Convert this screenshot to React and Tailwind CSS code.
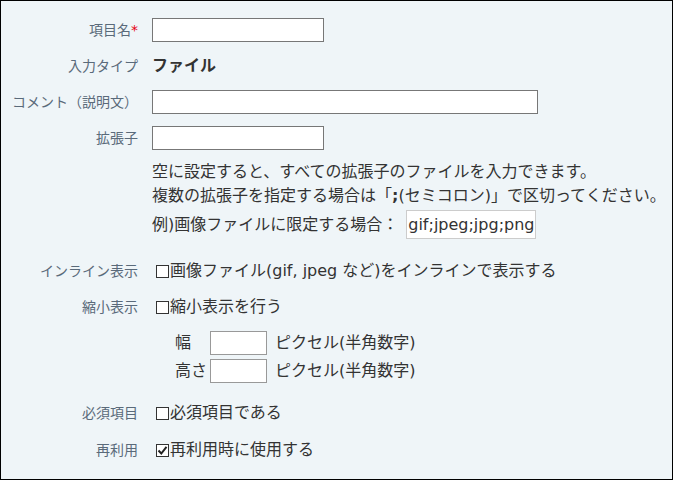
const font = { fontFamily: '"DejaVu Sans", "Noto Sans CJK JP", sans-serif' };

function Box({ checked }) {
  return (
    <span className="inline-flex items-center justify-center w-[13px] h-[13px] border border-[#333] bg-white ml-[4px] mr-[1px] shrink-0">
      {checked && (
        <svg width="11" height="11" viewBox="0 0 11 11">
          <path d="M1.5 5.5 L4.3 8.5 L9.5 1.8" fill="none" stroke="#222" strokeWidth="2" />
        </svg>
      )}
    </span>
  );
}

function Row({ label, required, className = "", children }) {
  return (
    <div className={`flex items-center h-[24px] ${className}`}>
      <div className="w-[151px] pr-[14px] text-right text-[14px] text-[#5a6a7a] whitespace-nowrap">
        {label}
        {required && <span className="text-[#e60012]">*</span>}
      </div>
      <div className="flex items-center text-[16px] text-[#333] whitespace-nowrap">{children}</div>
    </div>
  );
}

export default function App() {
  return (
    <div className="w-[673px] h-[480px] border border-black bg-[#eff5f8] pt-[17px] overflow-hidden" style={font}>
      <Row label="項目名" required>
        <input className="w-[172px] h-[24px] border border-[#777] bg-white" />
      </Row>
      <Row label="入力タイプ" className="mt-[12px]">
        <span className="font-bold text-[16px] text-[#333]">ファイル</span>
      </Row>
      <Row label="コメント（説明文）" className="mt-[12px]">
        <input className="w-[386px] h-[24px] border border-[#777] bg-white" />
      </Row>
      <Row label="拡張子" className="mt-[12px]">
        <input className="w-[172px] h-[24px] border border-[#777] bg-white" />
      </Row>

      <div className="pl-[151px] mt-[10px] text-[16px] text-[#333] leading-[24px] whitespace-nowrap">
        <div>空に設定すると、すべての拡張子のファイルを入力できます。</div>
        <div>
          複数の拡張子を指定する場合は「<b>;</b>(セミコロン)」で区切ってください。
        </div>
        <div className="flex items-center mt-[2px] h-[29px]">
          <span>例)画像ファイルに限定する場合：</span>
          <span className="ml-[8px] h-[29px] px-[1px] flex items-center border border-[#ccc] bg-white">
            gif;jpeg;jpg;png
          </span>
        </div>
      </div>

      <Row label="インライン表示" className="mt-[20px]">
        <Box />
        <span>画像ファイル(gif, jpeg など)をインラインで表示する</span>
      </Row>
      <Row label="縮小表示" className="mt-[12px]">
        <Box />
        <span>縮小表示を行う</span>
      </Row>
      <div className="pl-[174px] mt-[12px] text-[16px] text-[#333]">
        <div className="flex items-center h-[24px]">
          <span className="w-[35px]">幅</span>
          <input className="w-[57px] h-[24px] border border-[#999] bg-white" />
          <span className="ml-[8px]">ピクセル(半角数字)</span>
        </div>
        <div className="flex items-center h-[24px] mt-[4px]">
          <span className="w-[35px]">高さ</span>
          <input className="w-[57px] h-[24px] border border-[#999] bg-white" />
          <span className="ml-[8px]">ピクセル(半角数字)</span>
        </div>
      </div>
      <Row label="必須項目" className="mt-[18px]">
        <Box />
        <span>必須項目である</span>
      </Row>
      <Row label="再利用" className="mt-[13px]">
        <Box checked />
        <span>再利用時に使用する</span>
      </Row>
    </div>
  );
}
